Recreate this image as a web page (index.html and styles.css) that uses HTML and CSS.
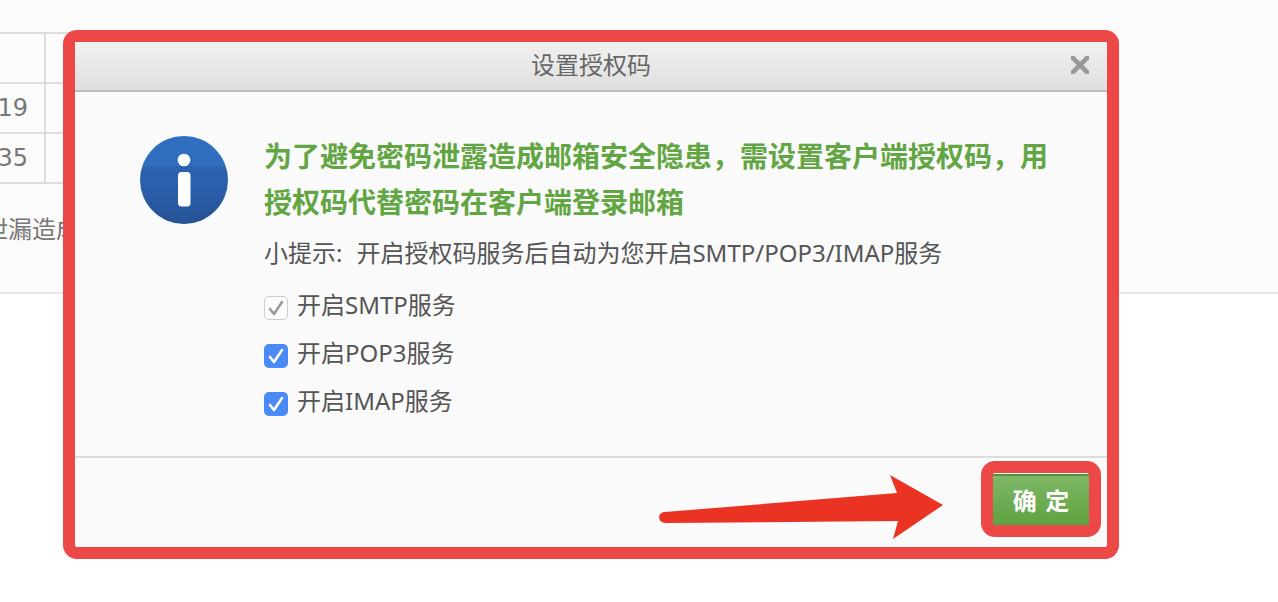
FILE: index.html
```html
<!DOCTYPE html>
<html lang="zh-CN">
<head>
<meta charset="utf-8">
<title>设置授权码</title>
<link rel="stylesheet" href="styles.css">
</head>
<body>
<main class="settings">
  <table class="ports">
    <tbody>
      <tr><td class="port"></td><td></td></tr>
      <tr><td class="port">19</td><td></td></tr>
      <tr><td class="port">35</td><td></td></tr>
    </tbody>
  </table>
  <p class="note">泄漏造成</p>
</main>

<section class="dialog" role="dialog" aria-labelledby="dialog-title">
  <header class="dialog-head">
    <h1 class="dialog-title" id="dialog-title">设置授权码</h1>
    <button class="close" type="button" aria-label="关闭">
      <svg viewBox="0 0 18 18" width="18" height="18"><path d="M1.500 1.500L16.500 16.500M16.500 1.500L1.500 16.500" stroke="#999" stroke-width="4.600" fill="none" stroke-linecap="square"/></svg>
    </button>
  </header>

  <div class="dialog-body">
    <svg class="info" viewBox="0 0 88 88" width="88" height="88" aria-hidden="true">
      <defs>
        <linearGradient id="blue" x1="0" y1="0" x2="0" y2="1">
          <stop offset="0" stop-color="#306fc1"/>
          <stop offset=".34" stop-color="#306dbb"/>
          <stop offset=".35" stop-color="#2a63ae"/>
          <stop offset=".55" stop-color="#2a60ac"/>
          <stop offset="1" stop-color="#245394"/>
        </linearGradient>
      </defs>
      <circle cx="44" cy="44" r="44" fill="url(#blue)"/>
      <circle cx="44" cy="24" r="6.300" fill="#fff"/>
      <rect x="38" y="36" width="12.500" height="34.500" rx="3.500" fill="#fff"/>
    </svg>
    <div class="content">
      <p class="lead">为了避免密码泄露造成邮箱安全隐患，需设置客户端授权码，用授权码代替密码在客户端登录邮箱</p>
      <p class="hint"><span>小提示:</span><span>开启授权码服务后自动为您开启SMTP/POP3/IMAP服务</span></p>
      <div class="options">
        <label class="option"><input class="check" type="checkbox" checked disabled>开启SMTP服务</label>
        <label class="option"><input class="check" type="checkbox" checked>开启POP3服务</label>
        <label class="option"><input class="check" type="checkbox" checked>开启IMAP服务</label>
      </div>
    </div>
  </div>

  <footer class="dialog-foot">
    <svg class="arrow" viewBox="0 0 284 64" width="284" height="64" aria-hidden="true"><path d="M6 37L238 18L231 0L284 30L234 64L239 46L7 48C-2 48-2 37 6 37Z" fill="#ea3323"/></svg>
    <div class="highlight"><button class="confirm" type="button">确 定</button></div>
  </footer>
</section>
</body>
</html>
```

FILE: styles.css
```css
* {
  box-sizing: border-box;
}

body {
  margin: 0;
  background: #fff;
  color: #555;
  font-family: "Noto Sans", "Noto Sans CJK SC", sans-serif;
  font-size: 24px;
}

h1,
p {
  margin: 0;
}

/* Settings page behind the dialog */
.settings {
  padding: 32px 0 38px;
  background: #fbfbfb;
  border-bottom: 2px solid #e8e8e8;
  color: #777;
  font-family: "DejaVu Sans", "Noto Sans CJK SC", sans-serif;
}

.ports {
  width: 400px;
  margin-left: -62px;
  border-collapse: collapse;
  table-layout: fixed;
}

.ports td {
  height: 50px;
  padding: 0;
  border: 2px solid #ddd;
  line-height: 32px;
}

.ports .port {
  width: 106px;
  padding-right: 16px;
  text-align: right;
}

.note {
  margin: 22px 0 0 -16px;
  line-height: 48px;
}

/* Dialog */
.dialog {
  position: absolute;
  top: 30px;
  left: 63px;
  right: 159px;
  border: 12px solid #ec4848;
  border-radius: 14px;
  background: #fafafa;
}

.dialog-head {
  display: grid;
  grid-template-columns: 36px 1fr 36px;
  align-items: center;
  height: 50px;
  padding-bottom: 2px;
  border-bottom: 2px solid #bbb;
  background: linear-gradient(#f1f1f1, #dfdfdf);
}

.dialog-title {
  grid-column: 2;
  color: #666;
  font-size: 24px;
  font-weight: 400;
  line-height: 46px;
  text-align: center;
}

.close {
  display: flex;
  width: 18px;
  padding: 0;
  border: 0;
  background: none;
}

.dialog-body {
  display: flex;
  align-items: flex-start;
  gap: 36px;
  padding: 41px 40px 31px 65px;
}

.info {
  flex: none;
  margin-top: 3px;
}

.lead {
  color: #62a643;
  font-size: 28px;
  font-weight: 700;
  line-height: 46px;
}

.hint {
  display: flex;
  gap: 14px;
  padding: 4px 0;
  line-height: 48px;
}

.option {
  display: flex;
  align-items: center;
  gap: 9px;
  line-height: 48px;
}

.check {
  flex: none;
  appearance: none;
  width: 24px;
  height: 24px;
  margin: 6px 0 0;
  border-radius: 5px;
  background: #4a8af4 url("data:image/svg+xml,%3Csvg xmlns='http://www.w3.org/2000/svg' viewBox='0 0 24 24'%3E%3Cpath d='M6 13l4 5 8-12' fill='none' stroke='%23fff' stroke-width='2.6' stroke-linecap='round' stroke-linejoin='round'/%3E%3C/svg%3E");
}

.check:disabled {
  border: 1px solid #ccc;
  background: #fcfcfc url("data:image/svg+xml,%3Csvg xmlns='http://www.w3.org/2000/svg' viewBox='1 1 22 22'%3E%3Cpath d='M6 13l4 5 8-12' fill='none' stroke='%239c9c9c' stroke-width='2.6' stroke-linecap='round' stroke-linejoin='round'/%3E%3C/svg%3E");
}

.dialog-foot {
  display: flex;
  justify-content: flex-end;
  align-items: flex-start;
  gap: 38px;
  padding: 3px 6px 8px;
  border-top: 2px solid #ddd;
  box-shadow: inset 0 2px #fff;
}

.arrow {
  margin-top: 14px;
}

.highlight {
  padding-top: 1px;
  border: 12px solid #ec4848;
  border-radius: 14px;
  background: #fff;
}

.confirm {
  display: block;
  width: 96px;
  height: 51px;
  padding: 2px 0 0;
  border: 0;
  border-top: 2px solid #539437;
  background: linear-gradient(#7fb867, #5fa140);
  color: #fff;
  font-family: "DejaVu Sans", "Noto Sans CJK SC", sans-serif;
  font-size: 24px;
  font-weight: 700;
  line-height: 46px;
}
```
